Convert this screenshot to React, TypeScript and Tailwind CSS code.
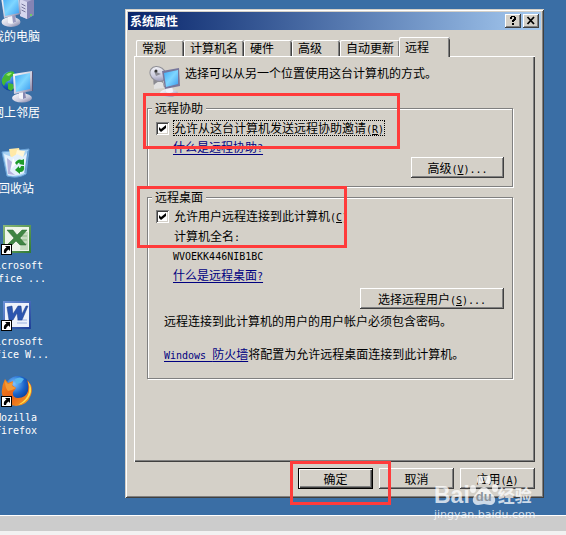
import { useState } from "react";
import type { ReactNode } from "react";

const raised =
  "bg-[#d4d0c8] shadow-[inset_-1px_-1px_0_#404040,inset_1px_1px_0_#fff,inset_-2px_-2px_0_#808080]";

// Half-width letters sit next to 12px Chinese glyphs at 6px each
const Latin = ({ children }: { children: ReactNode }) => (
  <span className="font-['DejaVu_Sans_Mono',monospace] text-[10px] leading-none">
    {children}
  </span>
);

const Key = ({ letter }: { letter: string }) => (
  <Latin>
    (<u className="underline-offset-1">{letter}</u>)
  </Latin>
);

/* ICONS */

const Gradients = () => (
  <svg className="absolute size-0" aria-hidden="true">
    <defs>
      <linearGradient id="screen" x1="0" y1="0" x2="1" y2="1">
        <stop offset="0" stopColor="#3fa9f5" />
        <stop offset="0.5" stopColor="#7fd6ff" />
        <stop offset="1" stopColor="#3b9cf0" />
      </linearGradient>
      <linearGradient id="metal" x1="0" y1="0" x2="1" y2="1">
        <stop offset="0" stopColor="#ffffff" />
        <stop offset="0.6" stopColor="#c9c9dc" />
        <stop offset="1" stopColor="#77779c" />
      </linearGradient>
      <radialGradient id="globe" cx="0.35" cy="0.3" r="0.8">
        <stop offset="0" stopColor="#7cc4ff" />
        <stop offset="0.5" stopColor="#1b63c9" />
        <stop offset="1" stopColor="#062a7a" />
      </radialGradient>
      <linearGradient id="fox" x1="0" y1="0" x2="1" y2="1">
        <stop offset="0" stopColor="#f08a1c" />
        <stop offset="0.5" stopColor="#e8601a" />
        <stop offset="1" stopColor="#f7a823" />
      </linearGradient>
      <linearGradient id="green" x1="0" y1="0" x2="1" y2="1">
        <stop offset="0" stopColor="#8cb878" />
        <stop offset="1" stopColor="#2f7a35" />
      </linearGradient>
      <linearGradient id="blue" x1="0" y1="0" x2="1" y2="1">
        <stop offset="0" stopColor="#6d92d8" />
        <stop offset="1" stopColor="#1d3f96" />
      </linearGradient>
    </defs>
  </svg>
);

const ComputerIcon = () => (
  <svg viewBox="0 0 34 34" className="h-[34px] w-[34px] shrink-0">
    <path d="M20 5l8-3 6 3v16l-7 4-7-3z" fill="#a9a9cf" />
    <path d="M20 5l7 3v17l-7-3z" fill="#d6d6ee" />
    <path d="M27 8l7-3v16l-7 4z" fill="#8484b4" />
    <path d="M21.500 10l4 2M21.500 13l4 2M21.500 16l4 2" stroke="#77779c" />
    <circle cx="31" cy="21" r="1" fill="#6be04a" />
    <ellipse cx="11" cy="28" rx="9.500" ry="5" fill="url(#metal)" />
    <path d="M8 21l7-1 1 8q-4 3-8 1z" fill="#f4f4fb" />
    <path d="M12 21l3-1 1 8-3 1z" fill="#9a9ac0" />
    <path d="M1 3l18-3 2 20-17 4z" fill="url(#metal)" />
    <path d="M3 5l15-3 1 17-14 3z" fill="url(#screen)" />
  </svg>
);

const NetworkIcon = () => (
  <svg viewBox="0 0 34 34" className="h-[34px] w-[34px] shrink-0">
    <circle cx="11" cy="11" r="10" fill="url(#globe)" />
    <path
      d="M5 4q5-4 9-2l1 3-4 2-1 3-4 2-2 4q-3-3-2-7zM8 13l5 1 1 4-3 3-3-2z"
      fill="#45b833"
    />
    <path d="M6 5q3-3 6-2l-3 3z" fill="#9be86f" />
    <ellipse cx="22" cy="28" rx="10" ry="4.500" fill="url(#metal)" />
    <path d="M19 22l6-1 1 7q-4 2-7 0z" fill="#f4f4fb" />
    <path d="M23 22l2-1 1 7-3 1z" fill="#8888b2" />
    <path d="M13 4l19-3v20l-18 3z" fill="url(#metal)" />
    <path d="M32 1l1 1v19l-1 0z" fill="#55557a" />
    <path d="M15 6l15-3v16l-14 3z" fill="url(#screen)" />
  </svg>
);

const RecycleIcon = () => (
  <svg viewBox="0 0 32 32" className="size-8 shrink-0">
    <path d="M2 6l27-3-3 25q-8 5-19 2z" fill="#a8d2f3" stroke="#6aa3d8" />
    <path d="M9 3l10-1 2 8-10 3z" fill="#ffe9a6" />
    <path d="M17 4l8 1-3 10-7-3z" fill="#fff6d6" />
    <path d="M4 8l8 3 5-3 6 3 4-4-3 20q-8 4-16 2z" fill="#e4f1fc" />
    <path d="M7 12l5 4-2 9 5 4-7-1z" fill="#b5b2dd" />
    <path d="M13 12l3 6-5 5z" fill="#ffffff" />
    <path
      d="M15 17q3-5 7-3l2-1v6l-5-1 1-1q-2-1-3 2zM24 20q1 6-4 6v2l-5-4 4-4v2q2 0 2-2z"
      fill="#1d9b2a"
    />
    <path d="M28 5l-3 22" stroke="#5d93cc" />
  </svg>
);

const Shortcut = () => (
  <>
    <path d="M1 22h11v11H1z" fill="#000" />
    <path d="M2 23h9v9H2z" fill="#fff" />
    <path d="M5 24h5v5L8.500 27.500Q6 29 6 31H4q-1-4 2.500-5.500z" fill="#000" />
  </>
);

const ExcelIcon = () => (
  <svg viewBox="0 0 33 33" className="h-[33px] w-[33px] shrink-0">
    <path d="M3 3h28v28H3z" fill="url(#green)" />
    <path d="M5 5h24v24H5z" fill="#eef5ea" />
    <path d="M22 10h6v18h-8z" fill="#c6dcc0" />
    <path d="M21 14h6M21 18h6M21 22h6" stroke="#8db887" />
    <path
      d="M7 8h6l4 5 5-5h5l-7 8 6 7h-6l-4-4-4 4H7l7-7z"
      fill="#3f8543"
      stroke="#2b6430"
      strokeWidth="0.500"
    />
    <Shortcut />
  </svg>
);

const WordIcon = () => (
  <svg viewBox="0 0 33 33" className="h-[33px] w-[33px] shrink-0">
    <path d="M3 3h28v28H3z" fill="url(#blue)" />
    <path d="M5 5h24v24H5z" fill="#eef2fb" />
    <path d="M17 22h10M17 25h10" stroke="#9fb4e0" />
    <path
      d="M7 9l5-1 1 8 5-8h3l1 8 4-8h2l-6 14h-4l-1-7-4 7h-4z"
      fill="#2c55b0"
      stroke="#1d3f86"
      strokeWidth="0.500"
    />
    <Shortcut />
  </svg>
);

const FirefoxIcon = () => (
  <svg viewBox="0 0 33 33" className="h-[33px] w-[33px] shrink-0">
    <circle cx="18" cy="15" r="13" fill="url(#globe)" />
    <path d="M15 5q5-3 9 0l-3 4-5 1z" fill="#57b5ea" />
    <path
      d="M27 6q7 6 4 15-4 11-15 11Q4 31 2 20 1 13 5 5l3 4 5-2-1 4 4 3-3 4q-1 6 5 6 8 0 10-7 1-6-1-11z"
      fill="url(#fox)"
    />
    <path d="M28 7q5 7 2 14-4 8-12 10 9-5 11-13 1-5-1-11z" fill="#ffe14d" />
    <path d="M5 7l3 3 5-2-1 4 4 2-4 2-4 1q-3-3-3-10z" fill="#f39a35" />
    <Shortcut />
  </svg>
);

const RemoteIcon = () => (
  <svg viewBox="0 0 32 32" className="size-8 shrink-0">
    <ellipse cx="20" cy="28" rx="9" ry="4" fill="url(#metal)" />
    <path d="M5 12l8 2 3 8-9 1q-4-3-2-11z" fill="#8b8b92" />
    <path d="M5 20q5-6 9-2l1 5-10 1z" fill="#e2e2e2" />
    <ellipse
      cx="9"
      cy="9"
      rx="8.500"
      ry="7"
      transform="rotate(35 9 9)"
      fill="url(#metal)"
      stroke="#8f8f96"
    />
    <path d="M5 6l7 3-5 2z" fill="#8c8c94" />
    <circle cx="7" cy="6" r="1.500" fill="#333" />
    <path d="M17 21l6-1 1 7q-4 2-7 0z" fill="#f2f2fa" />
    <path d="M13 6l17-3 1 18-15 3z" fill="#77779c" />
    <path d="M15 8l14-3v14l-12 3z" fill="url(#screen)" />
  </svg>
);

/* DESKTOP */

const shortcuts = [
  { icon: <ComputerIcon />, lines: ["我的电脑"] },
  { icon: <NetworkIcon />, lines: ["网上邻居"] },
  { icon: <RecycleIcon />, lines: ["回收站"] },
  { icon: <ExcelIcon />, lines: ["Microsoft", "Office ..."], latin: true },
  { icon: <WordIcon />, lines: ["Microsoft", "Office W..."], latin: true },
  { icon: <FirefoxIcon />, lines: ["Mozilla", "Firefox"], latin: true },
];

const Desktop = () => (
  <ul className="-mt-[15px] -ml-[22px] w-[76px] shrink-0 text-white">
    {shortcuts.map((s, i) => (
      <li key={i} className="flex h-[76px] flex-col items-center">
        <div className="flex h-9 w-8 shrink-0">{s.icon}</div>
        {s.lines.map((line) => (
          <span key={line} className="leading-3 whitespace-nowrap">
            {s.latin ? <Latin>{line}</Latin> : line}
          </span>
        ))}
      </li>
    ))}
  </ul>
);

/* DIALOG PARTS */

const tabs = ["常规", "计算机名", "硬件", "高级", "自动更新", "远程"];

type CheckProps = {
  id: string;
  focused?: boolean;
  children: ReactNode;
};

const Check = ({ id, focused, children }: CheckProps) => {
  const [checked, setChecked] = useState(true);

  return (
    <div className="flex h-4 items-center gap-1">
      <span className="relative size-[13px] shrink-0">
        <input
          id={id}
          type="checkbox"
          checked={checked}
          onChange={(e) => setChecked(e.target.checked)}
          className="peer block size-[13px] appearance-none bg-white shadow-[inset_1px_1px_0_#808080,inset_-1px_-1px_0_#fff,inset_2px_2px_0_#404040,inset_-2px_-2px_0_#d4d0c8]"
        />
        <svg
          viewBox="0 0 13 13"
          className="pointer-events-none absolute inset-0 hidden peer-checked:block"
        >
          <path d="M3 5l2 2 5-4v3L5 10 3 8z" fill="#000" />
        </svg>
      </span>
      <label
        htmlFor={id}
        className={
          focused
            ? "border border-dotted border-black leading-[14px] whitespace-nowrap"
            : "border border-transparent leading-[14px] whitespace-nowrap"
        }
      >
        {children}
      </label>
    </div>
  );
};

type GroupProps = {
  title: string;
  className: string;
  children: ReactNode;
};

const Group = ({ title, className, children }: GroupProps) => (
  <fieldset className="relative border border-[#808080] shadow-[inset_1px_1px_0_#fff,1px_1px_0_#fff]">
    <legend className="ml-1 bg-[#d4d0c8] px-[3px] leading-3">{title}</legend>
    <div className={className}>{children}</div>
  </fieldset>
);

const HelpLink = ({ children }: { children: ReactNode }) => (
  <a href="#help" className="text-[#000080] underline underline-offset-2">
    {children}
  </a>
);

const Watermark = () => (
  <div className="pointer-events-none absolute right-8 bottom-3 z-20 w-[100px] text-white/75">
    <div className="flex h-8 items-end">
      <span className="font-['Liberation_Sans',sans-serif] text-[23px] leading-6 font-bold">
        Bai
      </span>
      <span className="relative h-8 w-7 shrink-0">
        <svg viewBox="0 0 28 32" className="absolute inset-0 fill-current">
          <ellipse cx="3" cy="14" rx="3" ry="4" />
          <ellipse cx="10" cy="5" rx="3" ry="4.500" />
          <ellipse cx="18" cy="5" rx="3" ry="4.500" />
          <ellipse cx="25" cy="13" rx="3" ry="4" />
          <path d="M14 12c4 0 5 4 8 7 5 4 4 11-2 11-3 0-4-1-6-1s-3 1-6 1c-6 0-7-7-2-11 3-3 4-7 8-7z" />
        </svg>
        <span className="absolute inset-x-0 bottom-1 text-center font-['Liberation_Sans',sans-serif] text-[13px] leading-3 font-bold text-[#8e959c]">
          du
        </span>
      </span>
      <span className="text-[17px] leading-6 font-bold whitespace-nowrap">
        经验
      </span>
    </div>
    <div className="font-['DejaVu_Sans',sans-serif] text-[11px] leading-4">
      jingyan.baidu.com
    </div>
  </div>
);

const RemotePanel = () => (
  <section
    role="tabpanel"
    className="-mt-px bg-[#d4d0c8] pt-[9px] pr-[22px] pb-[83px] pl-[13px] shadow-[inset_1px_1px_0_#fff,inset_-1px_-1px_0_#404040,inset_-2px_-2px_0_#808080]"
  >
    <div className="mb-[5px] flex gap-1 pl-0.5">
      <RemoteIcon />
      <p className="leading-4 whitespace-nowrap">
        选择可以从另一个位置使用这台计算机的方式。
      </p>
    </div>

    <div className="flex flex-col gap-1">
      {/* REMOTE ASSISTANCE */}
      <Group title="远程协助" className="px-2 pt-1.5 pb-2">
        <Check id="assist" focused>
          允许从这台计算机发送远程协助邀请
          <Key letter="R" />
        </Check>
        <p className="mt-[3px] pl-[17px] leading-4">
          <HelpLink>
            什么是远程协助<Latin>?</Latin>
          </HelpLink>
        </p>
        <div className="mt-0.5 flex justify-end">
          <button type="button" className={`${raised} h-[21px] w-[93px]`}>
            高级
            <Key letter="V" />
            <Latin>...</Latin>
          </button>
        </div>
        <div className="pointer-events-none absolute -top-[21px] -left-[5px] z-10 h-[56px] w-[257px] border-3 border-[#ff3b3b]" />
      </Group>

      {/* REMOTE DESKTOP */}
      <Group title="远程桌面" className="px-2 pt-[5px] pb-4">
        <Check id="desktop">
          允许用户远程连接到此计算机
          <Key letter="C" />
        </Check>
        <p className="mt-1 pl-[18px] leading-4">
          计算机全名<Latin>:</Latin>
        </p>
        <p className="mt-[3px] pl-[17px] leading-4">
          <Latin>WVOEKK446NIB1BC</Latin>
        </p>
        <p className="mt-1 pl-[17px] leading-4">
          <HelpLink>
            什么是远程桌面<Latin>?</Latin>
          </HelpLink>
        </p>
        <div className="mt-[5px] flex justify-end">
          <button type="button" className={`${raised} h-[21px] w-36`}>
            选择远程用户
            <Key letter="S" />
            <Latin>...</Latin>
          </button>
        </div>
        <p className="mt-1 pl-2 leading-4">
          远程连接到此计算机的用户的用户帐户必须包含密码。
        </p>
        <p className="mt-[17px] pl-2 leading-4">
          <HelpLink>
            <Latin>Windows </Latin>防火墙
          </HelpLink>
          将配置为允许远程桌面连接到此计算机。
        </p>
        <div className="pointer-events-none absolute -top-[17px] -left-[11px] z-10 h-[62px] w-[210px] border-3 border-[#ff3b3b]" />
      </Group>
    </div>
  </section>
);

const Dialog = () => {
  const [active, setActive] = useState("远程");

  return (
    <main className="mr-[22px] ml-[71px] min-w-0 flex-1 self-start bg-[#d4d0c8] p-[3px] shadow-[inset_1px_1px_0_#d4d0c8,inset_-1px_-1px_0_#404040,inset_2px_2px_0_#fff,inset_-2px_-2px_0_#808080]">
      {/* TITLE BAR */}
      <header className="flex h-[18px] items-center gap-0.5 bg-linear-to-r from-[#0a246a] to-[#a6caf0] px-0.5">
        <h1 className="flex-1 leading-4 font-bold text-white">系统属性</h1>
        <button
          type="button"
          aria-label="Help"
          className={`${raised} flex h-3.5 w-4 items-center justify-center`}
        >
          <svg viewBox="0 0 16 14" className="h-3.5 w-4">
            <path
              d="M5 3h1V2h4v1h1v3h-1v1H9v1H7V6h1V5h1V3H7v2H5zM7 9h2v2H7z"
              fill="#000"
            />
          </svg>
        </button>
        <button
          type="button"
          aria-label="Close"
          className={`${raised} flex h-3.5 w-4 items-center justify-center`}
        >
          <svg viewBox="0 0 16 14" className="h-3.5 w-4">
            <path d="M4.500 3l6.500 7M11 3l-6.500 7" stroke="#000" strokeWidth="1.800" />
          </svg>
        </button>
      </header>

      <div className="px-1.5 pb-1.5">
        {/* TABS */}
        <div role="tablist" className="mt-[7px] flex h-5 pl-0.5">
          {tabs.map((tab) => (
            <button
              key={tab}
              type="button"
              role="tab"
              aria-selected={tab === active}
              onClick={() => setActive(tab)}
              className={
                tab === active
                  ? "relative z-10 -ml-px h-5 w-[51px] rounded-t-xs bg-[#d4d0c8] pl-1.5 text-left shadow-[inset_1px_0_0_#fff,inset_0_1px_0_#fff,inset_-1px_0_0_#404040,inset_-2px_0_0_#808080]"
                  : "mt-[3px] h-4 min-w-12 rounded-t-xs bg-[#d4d0c8] px-1.5 text-left leading-4 whitespace-nowrap shadow-[inset_1px_0_0_#fff,inset_0_1px_0_#fff,inset_-1px_0_0_#404040,inset_-2px_0_0_#808080]"
              }
            >
              {tab}
            </button>
          ))}
        </div>

        <RemotePanel />

        {/* BUTTONS */}
        <div className="mt-1.5 flex justify-end gap-1.5">
          <div className="relative">
            <button
              type="button"
              className="block h-[21px] w-[75px] border border-black bg-[#d4d0c8] shadow-[inset_1px_1px_0_#fff,inset_-1px_-1px_0_#404040,inset_-2px_-2px_0_#808080]"
            >
              确定
            </button>
            <div className="pointer-events-none absolute -top-[7px] -left-2 z-10 h-11 w-[101px] border-3 border-[#ff3b3b]" />
          </div>
          <button type="button" className={`${raised} h-[21px] w-[75px]`}>
            取消
          </button>
          <button type="button" className={`${raised} h-[21px] w-[75px]`}>
            应用
            <Key letter="A" />
          </button>
        </div>
      </div>
    </main>
  );
};

export default function App() {
  return (
    <div className="relative flex min-h-screen flex-col overflow-hidden bg-[#3a6ea5] font-['Noto_Sans_CJK_SC',sans-serif] text-[12px] leading-4 text-black">
      <Gradients />
      <div className="flex flex-1 pt-[9px] pb-4">
        <Desktop />
        <Dialog />
      </div>
      <footer className="h-5 border-t border-b-4 border-t-white border-b-[#f2f2f2] bg-[#cccccc]" />
      <Watermark />
    </div>
  );
}
